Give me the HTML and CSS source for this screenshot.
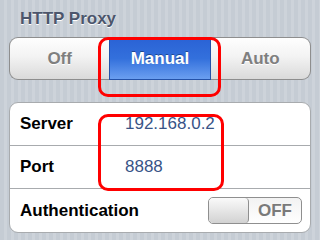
FILE: index.html
```html
<!DOCTYPE html>
<html lang="en">
  <head>
    <meta charset="UTF-8" />
    <meta name="viewport" content="width=device-width, initial-scale=1.0" />
    <title>HTTP Proxy</title>
    <link rel="stylesheet" href="styles.css">
  </head>
  <body>
    <div class="screen">
      <h2 class="group_title">HTTP Proxy</h2>

      <!-- Proxy mode -->
      <div class="segmented">
        <button class="seg">Off</button>
        <button class="seg valgt">Manual</button>
        <button class="seg">Auto</button>
      </div>

      <!-- Proxy settings -->
      <ul class="group">
        <li class="row">
          <span class="label">Server</span>
          <span class="value">192.168.0.2</span>
        </li>
        <li class="row">
          <span class="label">Port</span>
          <span class="value">8888</span>
        </li>
        <li class="row">
          <span class="label">Authentication</span>
          <span class="switch">
            <span class="knob"></span>
            <span class="switch_text">OFF</span>
          </span>
        </li>
      </ul>

      <!-- Red annotation boxes -->
      <div class="callout callout_mode"></div>
      <div class="callout callout_values"></div>
    </div>
  </body>
</html>
```

FILE: styles.css
```css
* {
  margin: 0;
  padding: 0;
  box-sizing: border-box;
}

body {
  width: 320px;
  height: 240px;
  overflow: hidden;
  font-family: 'Liberation Sans', Arial, sans-serif;
  background: repeating-linear-gradient(
    90deg,
    #c5ccd4 0,
    #c5ccd4 4px,
    #cdd3da 4px,
    #cdd3da 7px
  );
}

.screen {
  position: relative;
  height: 240px;
  padding: 0 9px;
}

/* Header */
.group_title {
  margin-top: 9px;
  padding-left: 11px;
  font-size: 17px;
  line-height: 20px;
  font-weight: bold;
  color: #4c566c;
  text-shadow: 0 1px 0 #fff;
}

/* Segmented control */
.segmented {
  display: flex;
  margin-top: 8px;
  height: 43px;
}

.seg {
  flex: 1;
  font-family: 'Liberation Sans', Arial, sans-serif;
  font-size: 17px;
  font-weight: bold;
  color: #7f7f7f;
  text-shadow: 0 1px 0 #fff;
  background: linear-gradient(#fefefe, #f3f3f3 45%, #dadada);
  border: 1px solid #8e8e8e;
}

.seg:first-child {
  border-radius: 9px 0 0 9px;
  border-right: none;
}

.seg:last-child {
  border-radius: 0 9px 9px 0;
  border-left: none;
}

.seg.valgt {
  color: #fff;
  text-shadow: 0 -1px 0 rgba(0, 0, 0, 0.35);
  background: linear-gradient(#2a62d5, #3370dc 50%, #6b9ff0);
  border-color: #2452a8;
}

/* Table group */
.group {
  list-style: none;
  margin-top: 22px;
  background-color: #fff;
  border: 1px solid #a8abae;
  border-radius: 9px;
}

.row {
  display: flex;
  align-items: center;
  height: 43px;
  padding: 0 8px 0 10px;
  border-bottom: 1px solid #a8abae;
}

.row:last-child {
  border-bottom: none;
}

.label {
  width: 105px;
  font-size: 17px;
  font-weight: bold;
  color: #000;
}

.value {
  font-size: 17px;
  color: #385487;
}

/* Switch */
.switch {
  display: flex;
  margin-left: auto;
  width: 94px;
  height: 27px;
  border: 1px solid #8f8f8f;
  border-radius: 5px;
  overflow: hidden;
  background: linear-gradient(#f2f2f2, #fff);
}

.knob {
  width: 40px;
  background: linear-gradient(#fafafa, #d2d2d2);
  border-right: 1px solid #8f8f8f;
  border-radius: 4px;
}

.switch_text {
  flex: 1;
  text-align: center;
  font-size: 17px;
  font-weight: bold;
  line-height: 25px;
  color: #7a7a7a;
}

/* Annotations */
.callout {
  position: absolute;
  border: 3px solid #f00;
  border-radius: 10px;
}

.callout_mode {
  left: 98px;
  top: 28px;
  width: 123px;
  height: 60px;
}

.callout_values {
  left: 98px;
  top: 105px;
  width: 126px;
  height: 77px;
}
```
